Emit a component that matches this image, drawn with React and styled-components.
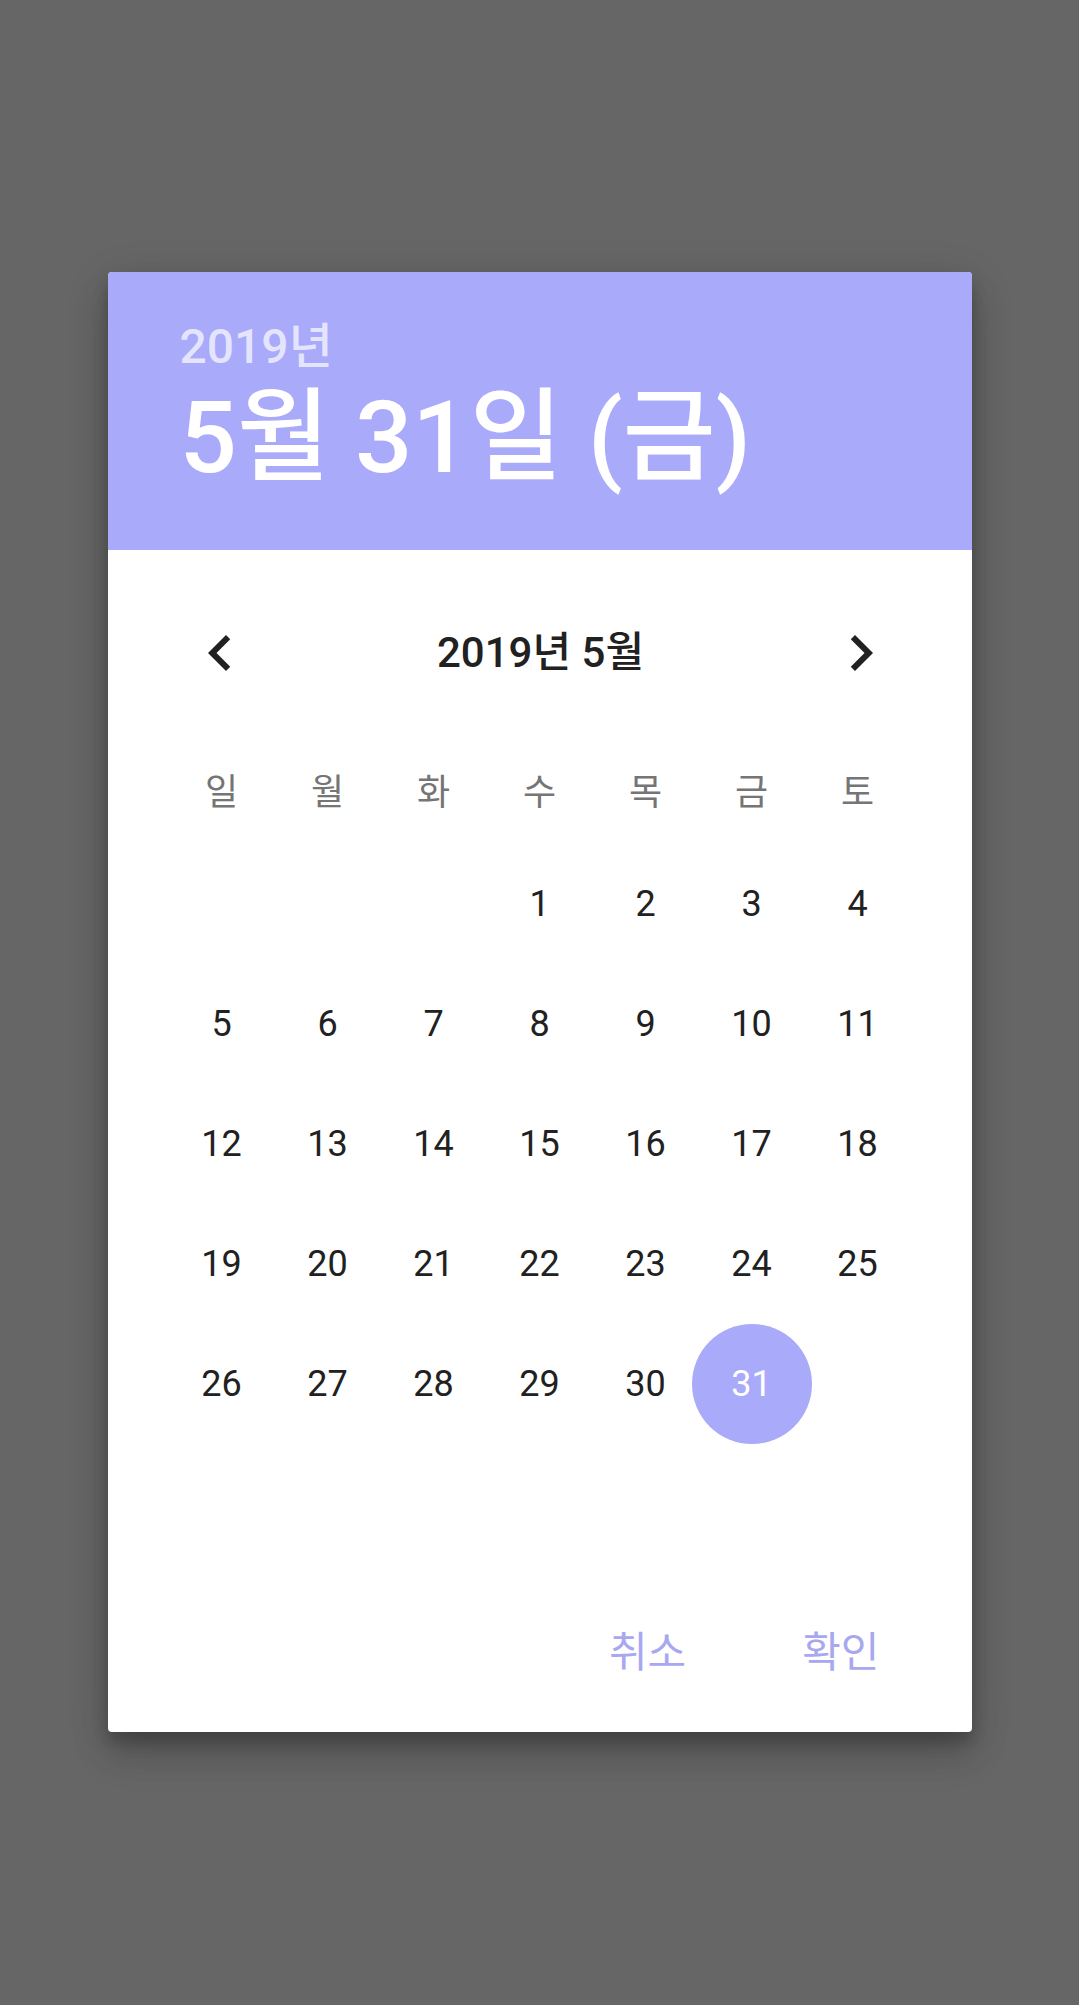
import styled, { createGlobalStyle } from 'styled-components';
import { MdChevronLeft, MdChevronRight } from 'react-icons/md';

const ACCENT = '#aaaafa';

const GlobalStyle = createGlobalStyle`
    html, body {
        margin: 0;
        padding: 0;
        background: #666666;
        font-family: Roboto, "Noto Sans CJK KR", sans-serif;
    }
    #root {
        min-height: 100vh;
        padding-top: 272px;
        box-sizing: border-box;
    }
`;

const Dialog = styled.div`
    width: 864px;
    margin: 0 auto;
    background: #ffffff;
    border-radius: 4px;
    overflow: hidden;
    box-shadow: 0 24px 38px rgba(0, 0, 0, 0.14), 0 9px 46px rgba(0, 0, 0, 0.12),
        0 11px 15px rgba(0, 0, 0, 0.2);
`;

const Header = styled.div`
    background: ${ACCENT};
    height: 278px;
    box-sizing: border-box;
    padding: 51px 72px 0;
    display: flex;
    flex-direction: column;
    gap: 16px;
`;

const Year = styled.div`
    font-size: 48px;
    line-height: 48px;
    font-weight: 500;
    color: rgba(255, 255, 255, 0.7);
`;

const DateLine = styled.div`
    font-size: 101px;
    line-height: 102px;
    font-weight: 500;
    color: #ffffff;
    white-space: nowrap;
`;

const Body = styled.div`
    padding: 67px 61px 0 61px;
`;

const Nav = styled.div`
    height: 72px;
    margin: 0 13px 0 15px;
    display: flex;
    align-items: center;
    justify-content: space-between;
`;

const NavButton = styled.button`
    width: 72px;
    height: 72px;
    padding: 0;
    border: none;
    background: none;
    color: #212121;
    display: flex;
    align-items: center;
    justify-content: center;
`;

const MonthTitle = styled.div`
    font-size: 42px;
    line-height: 72px;
    font-weight: 500;
    color: #212121;
`;

const Grid = styled.div`
    display: grid;
    grid-template-columns: repeat(7, minmax(0, 1fr));
    width: 742px;
`;

const WeekDays = styled(Grid)`
    margin-top: 45px;
`;

const WeekDay = styled.div`
    height: 110px;
    display: flex;
    align-items: center;
    justify-content: center;
    font-size: 36px;
    color: #757575;
`;

const Days = styled(Grid)`
    grid-template-rows: repeat(6, 120px);
`;

const DayCell = styled.div`
    display: flex;
    align-items: center;
    justify-content: center;
`;

const DayNumber = styled.span`
    flex: none;
    width: 120px;
    height: 120px;
    border-radius: 50%;
    display: flex;
    align-items: center;
    justify-content: center;
    font-size: 36px;
    color: ${(p) => (p.$selected ? '#ffffff' : '#212121')};
    background: ${(p) => (p.$selected ? ACCENT : 'transparent')};
`;

const Actions = styled.div`
    display: flex;
    justify-content: flex-end;
    gap: 68px;
    padding: 30px 68px 30px 0;
`;

const ActionButton = styled.button`
    height: 108px;
    padding: 0 24px;
    border: none;
    background: none;
    font-family: Roboto, "Noto Sans CJK KR", sans-serif;
    font-size: 42px;
    font-weight: 400;
    color: #a8a8f0;
`;

const weekNames = ['일', '월', '화', '수', '목', '금', '토'];

// 2019년 5월은 수요일부터 시작
const cells = [...Array(3).fill(null), ...Array.from({ length: 31 }, (_, i) => i + 1)];

const App = () => {
    return (
        <>
            <GlobalStyle />
            <Dialog>
                <Header>
                    <Year>2019년</Year>
                    <DateLine>5월 31일 (금)</DateLine>
                </Header>
                <Body>
                    <Nav>
                        <NavButton aria-label="이전 달">
                            <MdChevronLeft size={72} />
                        </NavButton>
                        <MonthTitle>2019년 5월</MonthTitle>
                        <NavButton aria-label="다음 달">
                            <MdChevronRight size={72} />
                        </NavButton>
                    </Nav>
                    <WeekDays>
                        {weekNames.map((name) => (
                            <WeekDay key={name}>{name}</WeekDay>
                        ))}
                    </WeekDays>
                    <Days>
                        {cells.map((day, i) => (
                            <DayCell key={i}>
                                {day && <DayNumber $selected={day === 31}>{day}</DayNumber>}
                            </DayCell>
                        ))}
                    </Days>
                </Body>
                <Actions>
                    <ActionButton>취소</ActionButton>
                    <ActionButton>확인</ActionButton>
                </Actions>
            </Dialog>
        </>
    );
};

export default App;
